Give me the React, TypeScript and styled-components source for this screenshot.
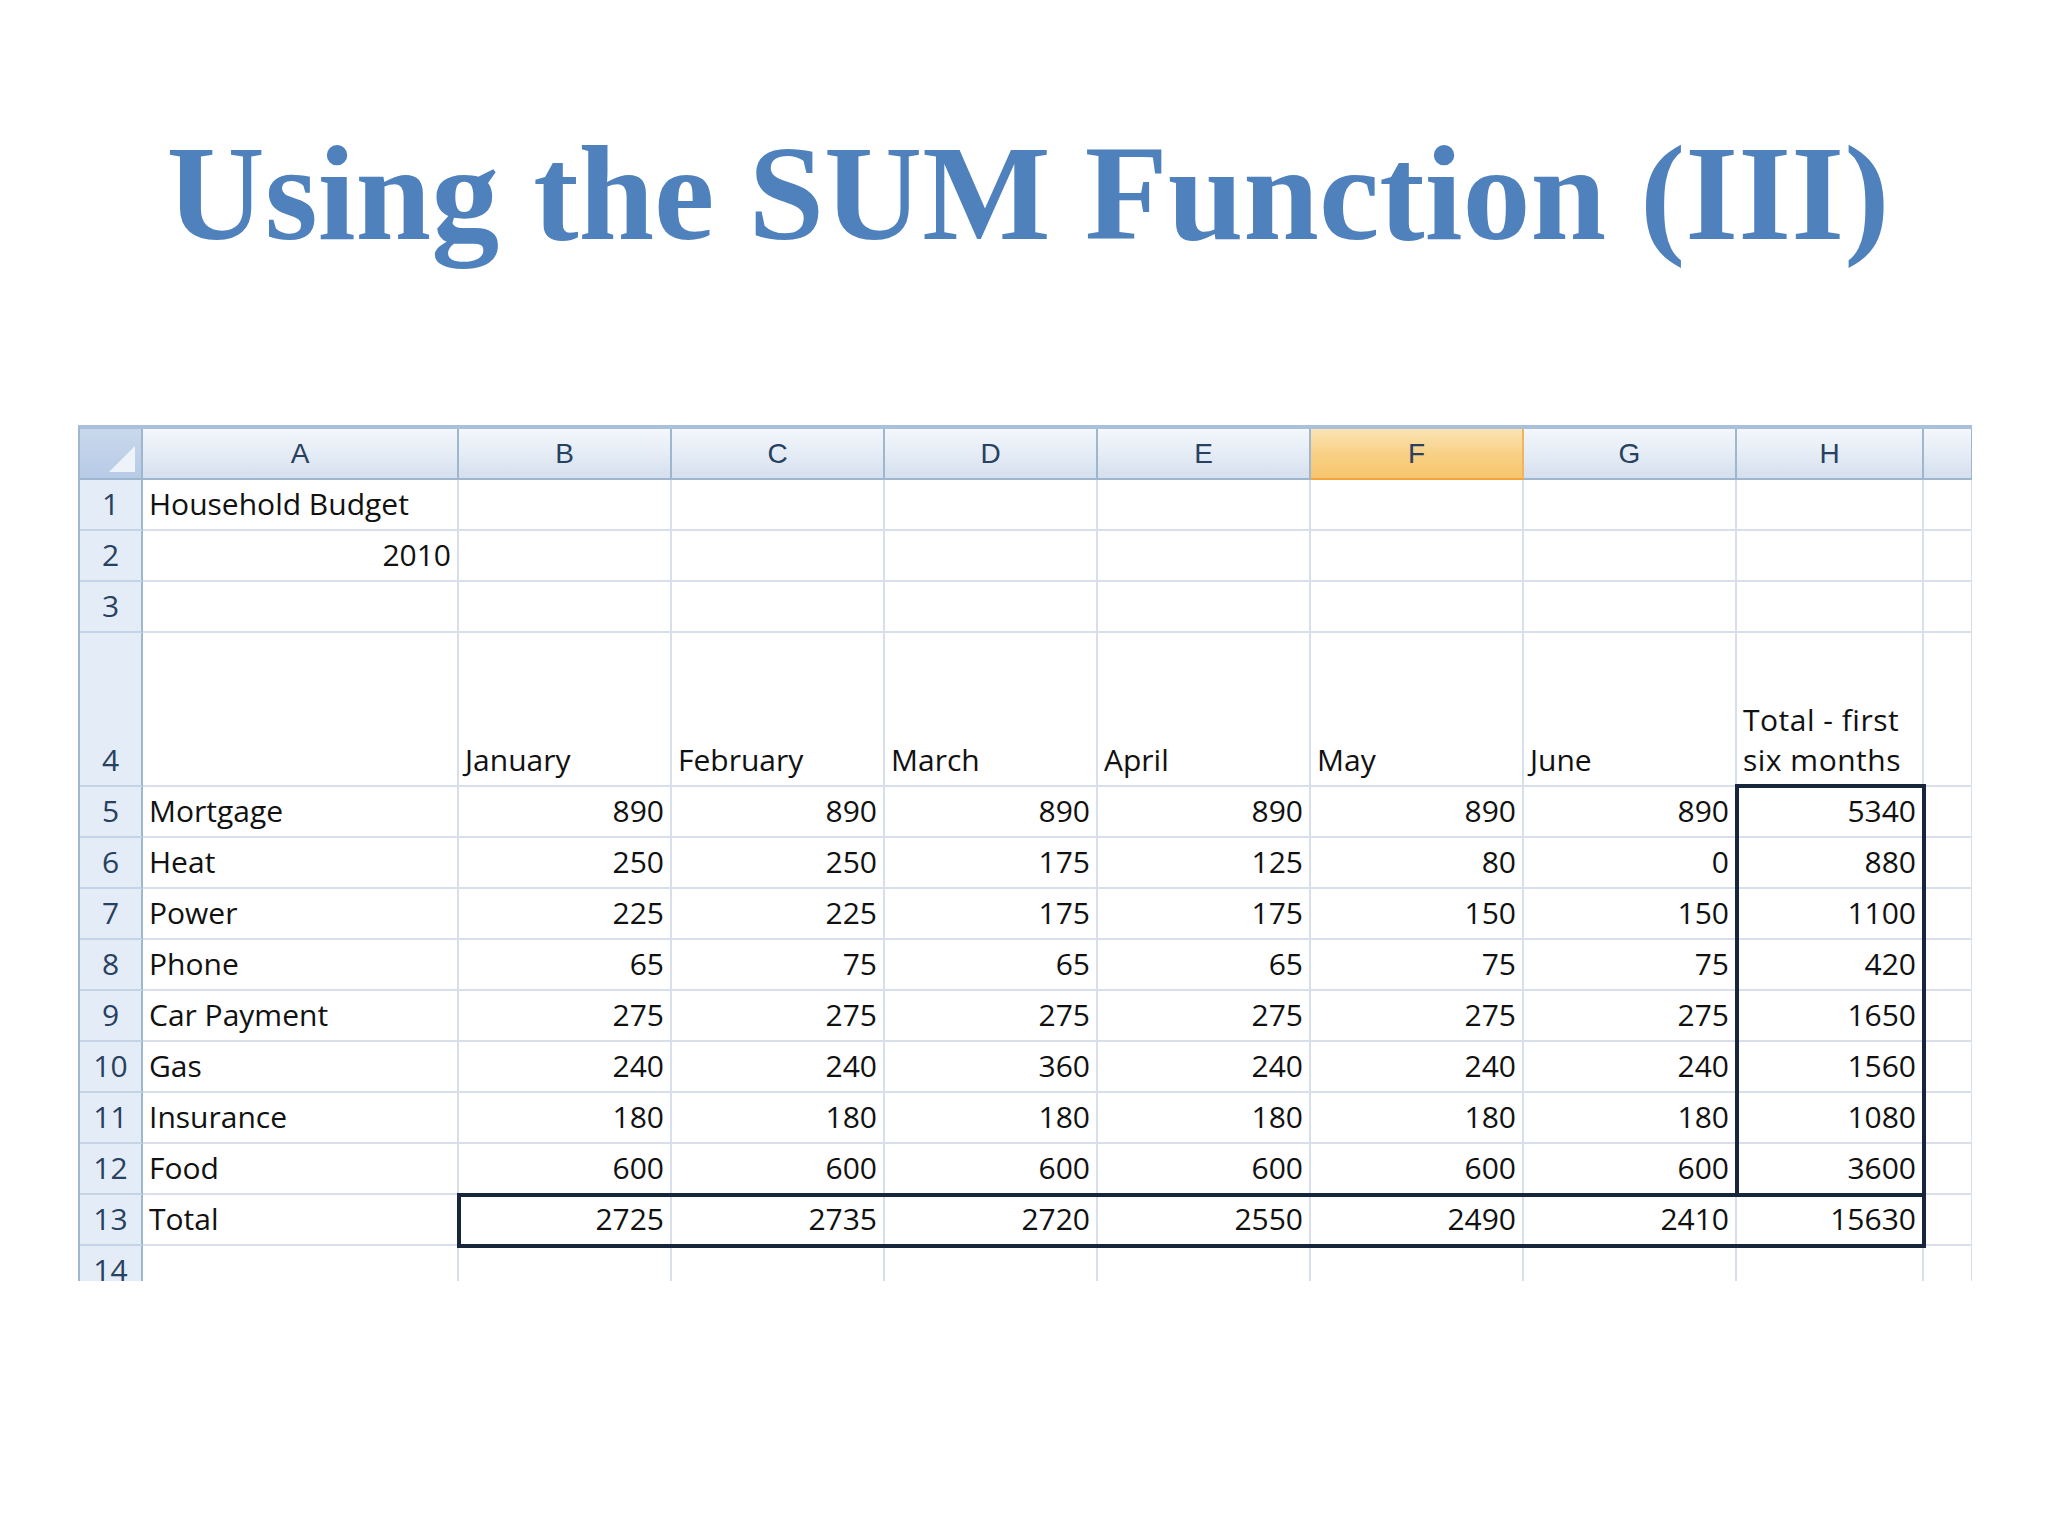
import styled, { createGlobalStyle } from "styled-components";

const GlobalStyle = createGlobalStyle`
  body { margin: 0; background: #fff; }
`;

const Page = styled.div`
  width: 2048px;
  height: 1536px;
  overflow: hidden;
  background: #fff;
`;

const Title = styled.h1`
  margin: 0;
  height: 425px;
  padding-top: 118px;
  box-sizing: border-box;
  text-align: center;
  font-family: "Liberation Serif", "DejaVu Serif", serif;
  font-weight: bold;
  font-size: 136px;
  line-height: 150px;
  color: #4f81bd;
  padding-left: 8px;
`;

const SheetWrap = styled.div`
  margin-left: 78px;
  width: 1892px;
  border-top: 4px solid #a9c0dc;
  border-left: 2px solid #9eb6ce;
  height: 852px;
  overflow: hidden;
  position: relative;
`;

const Grid = styled.div`
  display: grid;
  grid-template-columns: 63px 316px repeat(6, 213px) 187px 49px;
  grid-template-rows: 51px 51px 51px 51px 154px repeat(9, 51px) 51px;
  font-family: "Open Sans", "Noto Sans", sans-serif;
  font-size: 30px;
  color: #111;
`;

const ColHead = styled.div<{ $sel?: boolean }>`
  display: flex;
  align-items: center;
  justify-content: center;
  border-right: 2px solid ${(p) => (p.$sel ? "#f2b45a" : "#9eb6ce")};
  border-bottom: 2px solid ${(p) => (p.$sel ? "#f2a33a" : "#9eb6ce")};
  background: ${(p) =>
    p.$sel
      ? "linear-gradient(#fbe4b4, #f8cf83 55%, #f6c56e)"
      : "linear-gradient(#f4f7fb, #e3ebf5 55%, #d5e0ee)"};
  color: #27415f;
  font-family: "Liberation Sans", sans-serif;
  font-size: 28px;
  box-sizing: border-box;
`;

const Corner = styled(ColHead)`
  background: linear-gradient(#c9d8ec, #b7cbe6);
  position: relative;
  &::after {
    content: "";
    position: absolute;
    right: 6px;
    bottom: 6px;
    border-left: 26px solid transparent;
    border-bottom: 26px solid #eef3fa;
  }
`;

const RowHead = styled.div`
  display: flex;
  align-items: flex-end;
  justify-content: center;
  padding-bottom: 5px;
  box-sizing: border-box;
  background: #e4ecf7;
  border-right: 2px solid #9eb6ce;
  border-bottom: 2px solid #c5d3e6;
  color: #27415f;
  white-space: nowrap;
`;

const Cell = styled.div<{ $right?: boolean }>`
  display: flex;
  align-items: flex-end;
  justify-content: ${(p) => (p.$right ? "flex-end" : "flex-start")};
  padding: 0 6px 5px 6px;
  box-sizing: border-box;
  border-right: 2px solid #d8dfea;
  border-bottom: 2px solid #d8dfea;
  white-space: nowrap;
  line-height: 40px;
`;

const Wrapped = styled(Cell)`
  white-space: normal;
  letter-spacing: 0.5px;
`;

const Box = styled.div`
  position: absolute;
  border: 4px solid #17263a;
  box-sizing: border-box;
  pointer-events: none;
`;

const cols = ["A", "B", "C", "D", "E", "F", "G", "H", ""];
const months = ["January", "February", "March", "April", "May", "June"];
const data: [string, number[]][] = [
  ["Mortgage", [890, 890, 890, 890, 890, 890, 5340]],
  ["Heat", [250, 250, 175, 125, 80, 0, 880]],
  ["Power", [225, 225, 175, 175, 150, 150, 1100]],
  ["Phone", [65, 75, 65, 65, 75, 75, 420]],
  ["Car Payment", [275, 275, 275, 275, 275, 275, 1650]],
  ["Gas", [240, 240, 360, 240, 240, 240, 1560]],
  ["Insurance", [180, 180, 180, 180, 180, 180, 1080]],
  ["Food", [600, 600, 600, 600, 600, 600, 3600]],
  ["Total", [2725, 2735, 2720, 2550, 2490, 2410, 15630]],
];

const blanks = (n: number, key: string) =>
  Array.from({ length: n }, (_, i) => <Cell key={key + i} />);

export default function App() {
  return (
    <Page>
      <GlobalStyle />
      <Title>Using the SUM Function (III)</Title>
      <SheetWrap>
        <Grid>
          <Corner />
          {cols.map((c) => (
            <ColHead key={c || "x"} $sel={c === "F"}>
              {c}
            </ColHead>
          ))}
          <RowHead>1</RowHead>
          <Cell>Household Budget</Cell>
          {blanks(8, "r1")}
          <RowHead>2</RowHead>
          <Cell $right>2010</Cell>
          {blanks(8, "r2")}
          <RowHead>3</RowHead>
          {blanks(9, "r3")}
          <RowHead>4</RowHead>
          <Cell />
          {months.map((m) => (
            <Cell key={m}>{m}</Cell>
          ))}
          <Wrapped>Total - first six months</Wrapped>
          <Cell />
          {data.map(([label, vals], i) => (
            <>
              <RowHead key={"h" + i}>{i + 5}</RowHead>
              <Cell key={"l" + i}>{label}</Cell>
              {vals.map((v, j) => (
                <Cell key={i + "-" + j} $right>
                  {v}
                </Cell>
              ))}
              <Cell key={"e" + i} />
            </>
          ))}
          <RowHead>14</RowHead>
          {blanks(9, "r14")}
        </Grid>
        <Box style={{ left: 1655, top: 355, width: 191, height: 413 }} />
        <Box style={{ left: 377, top: 764, width: 1469, height: 55 }} />
      </SheetWrap>
    </Page>
  );
}
